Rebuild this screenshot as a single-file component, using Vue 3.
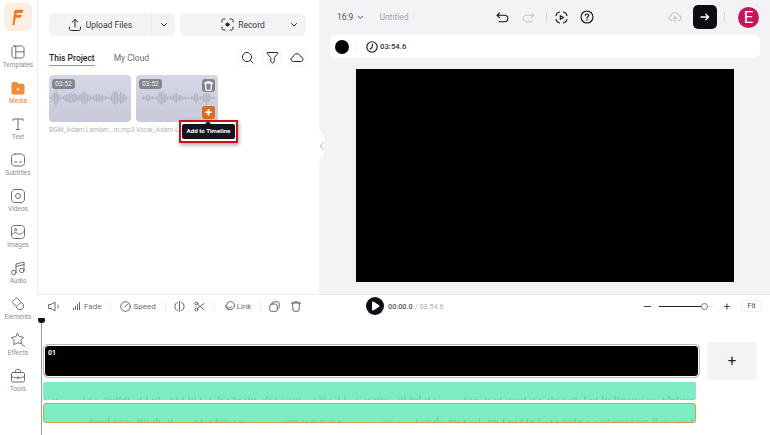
<template>
  <div class="app">
    <aside class="rail">
      <div class="logo">
        <svg width="12" height="17" viewBox="0 0 12 17"><path d="M4.300 .8h7.200L10.300 4H5.600c-.7 0-1.100.4-1.200 1l-.1.700h5.400L8.600 8.700H3.700L2.600 15.600c-.1.400-.4.600-.8.600H.5L2.100 3C2.300 1.600 3 .8 4.300 .8z" fill="#f07a26" /></svg>
      </div>
      <div v-for="item in railItems" :key="item.label" class="rail-item" :class="{ active: item.active }">
        <svg v-if="item.active" width="16" height="16" viewBox="0 0 16 16">
          <path d="M3.500 2h3c.6 0 1 .3 1.300.7l.7 1h4c1.200 0 2 .8 2 2v6.800c0 1.200-.8 2-2 2h-9c-1.200 0-2-.8-2-2v-8.500c0-1.200.8-2 2-2z" fill="#f5893a" />
          <path d="M8 7.800v3M6.500 9.300h3" stroke="#fff" stroke-width=".9" fill="none" />
        </svg>
        <svg v-else width="16" height="16" viewBox="0 0 16 16" class="line-icon"><path :d="item.d" /></svg>
        <span>{{ item.label }}</span>
      </div>
    </aside>

    <main class="main">
      <div class="top">
        <section class="panel">
          <div class="upload-row">
            <div class="big-btn">
              <div class="big-label">
                <svg width="14" height="14" viewBox="0 0 14 14" class="line-icon dark"><path d="M7 9V1.500M4.200 4 7 1.500 9.800 4M1.500 9v1.800c0 1 .7 1.700 1.700 1.700h7.600c1 0 1.700-.7 1.700-1.700V9" /></svg>
                Upload Files
              </div>
              <div class="btn-split"></div>
              <svg width="8" height="6" viewBox="0 0 8 6" class="line-icon dark caret"><path d="M1.500 1.500 4 4l2.500-2.500" /></svg>
            </div>
            <div class="big-btn">
              <div class="big-label">
                <svg width="13" height="13" viewBox="0 0 13 13" class="line-icon dark"><path d="M1 4V2.500C1 1.600 1.600 1 2.500 1H4M9 1h1.500c.9 0 1.500.6 1.500 1.500V4M12 9v1.500c0 .9-.6 1.500-1.500 1.500H9M4 12H2.500C1.600 12 1 11.400 1 10.500V9" /><circle cx="6.500" cy="6.500" r="1.600" fill="#26262b" /></svg>
                Record
              </div>
              <svg width="8" height="6" viewBox="0 0 8 6" class="line-icon dark caret over"><path d="M1.500 1.500 4 4l2.500-2.500" /></svg>
            </div>
          </div>

          <div class="tab-row">
            <span class="tab on">This Project</span>
            <span class="tab">My Cloud</span>
            <div class="tab-tools">
              <div class="tool"><svg width="13" height="13" viewBox="0 0 13 13" class="line-icon dark"><circle cx="6" cy="6" r="4.600" /><path d="m9.500 9.500 2.500 2.500" /></svg></div>
              <div class="tool"><svg width="13" height="13" viewBox="0 0 13 13" class="line-icon dark"><path d="M1.500 1.500h10c.4 0 .6.400.4.800L8.500 6.500c-.2.300-.3.500-.3.800v3.200c0 .8-.9 1.500-1.700 1.500s-1.700-.7-1.700-1.500V7.300c0-.3-.1-.5-.3-.8L1.100 2.300c-.2-.4 0-.8.400-.8z" /></svg></div>
              <div class="tool"><svg width="14" height="13" viewBox="0 0 14 13" class="line-icon dark"><path d="M3.500 10.500C2 10.500 1 9.500 1 8.200 1 7 2 6 3.200 5.900 3.500 4 5 2.800 7 2.800S10.500 4 10.800 5.900C12 6 13 7 13 8.200c0 1.300-1 2.300-2.500 2.300z" /></svg></div>
            </div>
          </div>

          <div class="media-grid">
            <div v-for="card in cards" :key="card.name" class="media-item">
              <div class="thumb">
                <svg class="thumb-wave" width="82" height="47" viewBox="0 0 82 47"><path :d="card.wave" /></svg>
                <span class="dur">03:52</span>
                <template v-if="card.hover">
                  <div class="thumb-trash">
                    <svg width="9" height="10" viewBox="0 0 9 10" class="line-icon light"><path d="M.5 2h8M3 2V.8h3V2M1.500 2l.4 6.500c0 .5.3.9.8.9h3.600c.5 0 .8-.4.8-.9L7.500 2" /></svg>
                  </div>
                  <div class="thumb-add">+</div>
                </template>
              </div>
              <div class="caption">{{ card.name }}</div>
            </div>
            <div class="tip-box">
              <span class="tip-arrow"></span>
              <span class="tip">Add to Timeline</span>
            </div>
          </div>
          <div class="handle"><svg width="5" height="8" viewBox="0 0 5 8" class="line-icon soft"><path d="M4 1 1 4l3 3" /></svg></div>
        </section>

        <section class="preview">
          <div class="head">
            <span class="ratio">16:9</span>
            <svg width="7" height="5" viewBox="0 0 8 6" class="line-icon dark"><path d="M1.500 1.500 4 4l2.500-2.500" /></svg>
            <span class="title">Untitled</span>
            <div class="head-mid">
              <svg width="13" height="11" viewBox="0 0 13 11" class="line-icon black"><path d="M3.500 1 1 3.300l2.500 2.300M1 3.300h7.500c2 0 3.300 1.200 3.300 3.200s-1.300 3.300-3.300 3.300H3" /></svg>
              <svg width="13" height="11" viewBox="0 0 13 11" class="line-icon faint"><path d="M9.500 1 12 3.300 9.500 5.600M12 3.300H4.500C2.500 3.300 1.200 4.500 1.200 6.500s1.300 3.300 3.300 3.300H10" /></svg>
              <span class="head-sep mid"></span>
              <svg width="13" height="13" viewBox="0 0 13 13" class="line-icon black"><path d="M1 4.500C1.400 2.800 2.800 1.400 4.500 1M8.500 1c1.700.4 3.100 1.800 3.500 3.500M12 8.500c-.4 1.700-1.800 3.100-3.500 3.500M4.500 12C2.800 11.600 1.400 10.200 1 8.500M5.300 4.600v3.800l3.200-1.900z" /></svg>
              <svg width="14" height="14" viewBox="0 0 14 14" class="line-icon black help"><circle cx="7" cy="7" r="6" /><path d="M5.300 5.400C5.400 4.500 6.100 4 7 4s1.700.6 1.700 1.500S7.700 6.700 7 7.500v.6M7 9.600v.6" /></svg>
            </div>
            <svg class="cloud-up" width="14" height="12" viewBox="0 0 14 12" fill="none"><path d="M4 9.500C2.200 9.500 1 8.400 1 7c0-1.300 1-2.300 2.200-2.400C3.500 2.700 5 1.500 7 1.500s3.500 1.200 3.800 3.100C12 4.700 13 5.700 13 7c0 1.400-1.200 2.500-3 2.500M7 11V6M5.200 7.500 7 5.700l1.800 1.800" stroke="#c6c6cc" stroke-width="1.100" stroke-linecap="round" stroke-linejoin="round" /></svg>
            <button class="next"><svg width="10" height="8" viewBox="0 0 10 8" class="line-icon light"><path d="M1 4h7.500M5.800 1.200 8.600 4 5.800 6.800" /></svg></button>
            <span class="head-sep right"></span>
            <div class="avatar">E</div>
          </div>
          <div class="prop-bar">
            <span class="swatch"></span>
            <span class="prop-sep"></span>
            <svg width="12" height="12" viewBox="0 0 12 12" class="line-icon black"><circle cx="6" cy="6" r="5.200" /><path d="M6.500 3.200 6 6.500 4.200 8" /></svg>
            <span class="prop-time">03:54.6</span>
          </div>
          <div class="stage"></div>
        </section>
      </div>

      <section class="timeline">
        <div class="tl-bar">
          <div class="tl-tools">
            <svg width="12" height="11" viewBox="0 0 12 11"><path d="M1 3.500h2L7 1v9L3 7.500H1zM10 4v3" /></svg>
            <svg class="bars" width="8" height="8" viewBox="0 0 8 8"><path d="M.5 8V6M2.500 8V4.500M4.500 8V2.500M6.500 8V.5" /></svg>
            <span class="tl-text fade">Fade</span>
            <span class="tl-sep"></span>
            <svg width="11" height="11" viewBox="0 0 11 11"><circle cx="5.500" cy="5.500" r="4.800" /><path d="M5 6 7.500 3.200" /></svg>
            <span class="tl-text speed">Speed</span>
            <span class="tl-sep"></span>
            <svg class="split" width="11" height="11" viewBox="0 0 11 11"><path d="M3.500 1.500C2 1.500 1 3.500 1 5.500s1 4 2.500 4M7.500 1.500C9 1.500 10 3.500 10 5.500s-1 4-2.500 4M5.500 .5v10" /></svg>
            <svg class="scissor" width="11" height="11" viewBox="0 0 11 11"><circle cx="2.300" cy="2.500" r="1.500" /><circle cx="2.300" cy="8.500" r="1.500" /><path d="M3.500 3.500 10 8.500M3.500 7.500 10 2.500" /></svg>
            <span class="tl-sep"></span>
            <svg class="link" width="11" height="11" viewBox="0 0 11 11"><circle cx="6.500" cy="4.500" r="4" /><path d="M5 8.500a3.500 3.500 0 0 1-3.500-3.800M4.800 5.800c.8 1 2.200.9 3-.1" /></svg>
            <span class="tl-text linktxt">Link</span>
            <span class="tl-sep"></span>
            <svg class="copy" width="11" height="11" viewBox="0 0 11 11"><rect x=".8" y="3" width="7.400" height="7.400" rx="2" /><path d="M3.200 3V2.500c0-1 .7-1.700 1.700-1.700h3.600c1 0 1.700.7 1.700 1.700v3.600c0 1-.7 1.700-1.700 1.700" /></svg>
            <svg class="bin" width="10" height="11" viewBox="0 0 10 11"><path d="M.5 2h9M3.200 2V.8h3.600V2M1.500 2l.5 7.200c0 .6.400 1 1 1h4c.6 0 1-.4 1-1L8.500 2" /></svg>
          </div>
          <div class="play-wrap">
            <span class="play"><svg width="9" height="10" viewBox="0 0 9 10"><path d="M1 1.300C1 .6 1.700.2 2.300.6l5.800 3.600c.5.400.5 1.200 0 1.600L2.300 9.400C1.700 9.800 1 9.400 1 8.700z" fill="#fff" /></svg></span>
            <span class="now">00:00.0</span>
            <span class="total">/ 03:54.6</span>
          </div>
          <div class="zoom">
            <span class="zoom-minus"></span>
            <div class="slider"><span class="knob"></span></div>
            <span class="zoom-plus">+</span>
            <span class="fit">Fit</span>
          </div>
        </div>

        <div class="tracks">
          <div class="track-row">
            <div class="video-track"><span>01</span></div>
            <div class="add-track">+</div>
          </div>
          <div class="audio-track">
            <svg width="653" height="18" viewBox="0 0 653 18"><path :d="audioA" /></svg>
          </div>
          <div class="audio-track picked">
            <svg width="653" height="18" viewBox="0 0 653 18"><path :d="audioB" /></svg>
          </div>
        </div>

        <div class="playhead"><span class="playhead-top"></span></div>
      </section>
    </main>

    <div class="callout"></div>
  </div>
</template>

<script setup>
const railItems = [
  { label: 'Templates', d: 'M4.500 2h7c1.500 0 2.500 1 2.500 2.500v7c0 1.500-1 2.500-2.500 2.500h-7C3 14 2 13 2 11.500v-7C2 3 3 2 4.500 2zM5.800 2v12M5.800 7.800H14' },
  { label: 'Media', active: true },
  { label: 'Text', d: 'M3 4.500V3h10v1.500M8 3v10.500M6.300 13.500h3.400' },
  { label: 'Subtitles', d: 'M5 2h6c2 0 3.500 1.500 3.500 3.500v5c0 2-1.500 3.500-3.500 3.500H5c-2 0-3.500-1.500-3.500-3.500v-5C1.500 3.500 3 2 5 2zM4.500 10h2.500M9.500 10h2' },
  { label: 'Videos', d: 'M5 1.500h6c2 0 3.500 1.500 3.500 3.500v6c0 2-1.500 3.500-3.500 3.500H5c-2 0-3.500-1.500-3.500-3.500V5c0-2 1.500-3.500 3.500-3.500zM8 5.500a2.500 2.500 0 1 1 0 5 2.500 2.500 0 0 1 0-5z' },
  { label: 'Images', d: 'M4.500 1.500h7c1.700 0 3 1.300 3 3v7c0 1.700-1.300 3-3 3h-7c-1.700 0-3-1.300-3-3v-7c0-1.700 1.300-3 3-3zM1.500 11c2-2.500 4-3 6-1.500S12 10 14.500 7M5.500 4.500a1.200 1.200 0 1 1 0 2.400 1.200 1.200 0 0 1 0-2.400z' },
  { label: 'Audio', d: 'M6 12.500V4l8-2v8.500M6 12.500a2.200 2.200 0 1 1-4.400 0 2.200 2.200 0 0 1 4.400 0zM14 10.500a2.200 2.200 0 1 1-4.400 0 2.200 2.200 0 0 1 4.400 0zM6 6.500l8-2' },
  { label: 'Elements', d: 'M5.700 2.300c.5-.5 1.100-.5 1.600 0l3 3c.5.5.5 1.100 0 1.600l-3 3c-.5.5-1.100.5-1.600 0l-3-3c-.5-.5-.5-1.100 0-1.600zM10.800 6.300a3.800 3.800 0 1 1-4.500 5' },
  { label: 'Effects', d: 'M7.500 1.500l1.800 3.100 4.200.7-2.700 3 .8 3.700-3.800-1.300-4 2 .3-4.300L1.500 5.500l4.200-.8zM12.500 12.500l2 2' },
  { label: 'Tools', d: 'M3 4.500h10c1 0 1.500.6 1.500 1.500v6.500c0 1-.5 1.500-1.500 1.500H3c-1 0-1.500-.5-1.500-1.500V6c0-.9.5-1.500 1.500-1.500zM5.500 4.500V3c0-.8.5-1.500 1.300-1.500h2.400c.8 0 1.300.7 1.300 1.500v1.500M1.500 8.500c4 2 9 2 13 0M8 8.500v2' }
]

// small seeded generator, so the picture stays the same between runs
function seeded(seed) {
  let s = seed
  return () => {
    s = (s * 9301 + 49297) % 233280
    return s / 233280
  }
}

function thumbWave(seed, from, to, peaks) {
  const rnd = seeded(seed)
  let d = ''
  for (let x = from; x <= to; x += 1.5) {
    let env = 1.5
    for (const [px, amp, w] of peaks) {
      env = Math.max(env, amp * Math.exp(-((x - px) ** 2) / (w * w)))
    }
    const h = env * (0.55 + rnd() * 0.45)
    d += `M${x} ${(23 - h).toFixed(1)}V${(23 + h).toFixed(1)}`
  }
  return d
}

function trackWave(seed, height, gaps) {
  const rnd = seeded(seed)
  let d = ''
  for (let x = 2; x < 651; x += 3) {
    if (gaps.some(([a, b]) => x > a && x < b)) continue
    if (rnd() < 0.35) continue
    const h = 1 + rnd() * rnd() * 4
    d += `M${x} ${height}v${(-h).toFixed(1)}`
  }
  return d
}

const cards = [
  {
    name: 'BGM_Adam Lamber...m.mp3',
    wave: thumbWave(3, 1, 78, [[7, 10, 3], [22, 6, 8], [35, 7, 7], [50, 5, 8], [66, 11, 3], [72, 7, 5]])
  },
  {
    name: 'Vocal_Adam Lamber...m.mp3',
    hover: true,
    wave: thumbWave(7, 6, 78, [[12, 4, 5], [26, 9, 5], [40, 5, 7], [60, 7, 3], [70, 8, 4]])
  }
]

const audioA = trackWave(11, 18, [[15, 40], [400, 420]])
const audioB = trackWave(23, 18, [[0, 42], [130, 150], [200, 240], [300, 340]])
</script>

<style>
html, body {
  margin: 0;
  background: #fff;
}
</style>

<style scoped>
.app {
  position: relative;
  width: 770px;
  height: 435px;
  overflow: hidden;
  display: flex;
  font-family: Roboto, "Liberation Sans", sans-serif;
  color: #26262b;
  background: #fff;
}

.line-icon {
  fill: none;
  stroke: #6b6b73;
  stroke-width: 1;
  stroke-linecap: round;
  stroke-linejoin: round;
  flex: none;
}
.line-icon.dark { stroke: #26262b; }
.line-icon.black { stroke: #111; stroke-width: 1.100; }
.line-icon.faint { stroke: #c4c4ca; }
.line-icon.light { stroke: #fff; stroke-width: 1.300; }
.line-icon.soft { stroke: #b5b5bb; }

/* left rail */
.rail {
  position: relative;
  width: 38px;
  flex: none;
  display: flex;
  flex-direction: column;
  align-items: center;
  padding: 3px 2px 0 0;
  box-sizing: border-box;
}
.rail::after {
  content: "";
  position: absolute;
  right: 0;
  top: 0;
  width: 1px;
  height: 294px;
  background: #ececef;
}
.logo {
  width: 28px;
  height: 28px;
  flex: none;
  margin-bottom: 13px;
  border-radius: 6px;
  background: #fdeee2;
  display: flex;
  align-items: center;
  justify-content: center;
}
.rail-item {
  height: 36px;
  flex: none;
  display: flex;
  flex-direction: column;
  align-items: center;
  gap: 1px;
  font-size: 6.500px;
  color: #8d8d95;
}
.rail-item.active {
  color: #f07a26;
}

.main {
  flex: 1;
  min-width: 0;
  display: flex;
  flex-direction: column;
}
.top {
  height: 294px;
  flex: none;
  display: flex;
}

/* media panel */
.panel {
  position: relative;
  z-index: 1;
  width: 281px;
  flex: none;
  padding: 13px 13px 0 11px;
  box-sizing: border-box;
}
.upload-row {
  display: flex;
  gap: 5px;
}
.big-btn {
  position: relative;
  flex: 1;
  height: 23px;
  border-radius: 6px;
  background: #f3f3f5;
  display: flex;
  align-items: center;
  font-size: 8.500px;
  color: #3a3a40;
}
.big-label {
  flex: 1;
  display: flex;
  align-items: center;
  justify-content: center;
  gap: 4px;
}
.btn-split {
  width: 1px;
  height: 23px;
  background: #eaeaed;
}
.caret {
  margin: 0 7px 0 8px;
}
.caret.over {
  position: absolute;
  right: 0;
  top: 9px;
  margin: 0 8px 0 0;
}
.tab-row {
  display: flex;
  align-items: center;
  margin-top: 12px;
  height: 19px;
}
.tab {
  position: relative;
  font-size: 8.500px;
  color: #6b6b73;
  margin-right: 19px;
}
.tab.on {
  color: #26262b;
  font-weight: 500;
}
.tab.on::after {
  content: "";
  position: absolute;
  left: 0;
  right: 0;
  bottom: -3px;
  height: 1px;
  background: #f07a26;
}
.tab-tools {
  margin-left: auto;
  display: flex;
  gap: 7px;
}
.tool {
  width: 18px;
  height: 19px;
  border: 1px solid #f4f4f6;
  border-radius: 5px;
  box-sizing: border-box;
  display: flex;
  align-items: center;
  justify-content: center;
}
.media-grid {
  position: relative;
  display: flex;
  gap: 5px;
  margin-top: 8px;
}
.media-item {
  width: 82px;
  flex: none;
}
.thumb {
  position: relative;
  height: 47px;
  border-radius: 4px;
  background: linear-gradient(180deg, #d5d7e5, #c8cadb);
}
.thumb-wave {
  position: absolute;
  inset: 0;
  fill: none;
  stroke: #a7a9b6;
  stroke-width: .8;
}
.dur {
  position: absolute;
  left: 3px;
  top: 4px;
  padding: 1px 3px;
  border-radius: 3px;
  background: #84858c;
  color: #f1f1f3;
  font-size: 6.800px;
  line-height: 8px;
}
.thumb-trash, .thumb-add {
  position: absolute;
  right: 3px;
  width: 13px;
  height: 13px;
  border-radius: 3px;
  display: flex;
  align-items: center;
  justify-content: center;
}
.thumb-trash {
  top: 4px;
  background: #84858c;
}
.thumb-add {
  top: 31px;
  background: #e06a16;
  color: #fff;
  font-size: 13px;
  font-weight: 700;
  line-height: 13px;
}
.caption {
  margin-top: 4px;
  font-size: 6.700px;
  color: #b3b3ba;
  white-space: nowrap;
}
.tip-box {
  position: absolute;
  left: 133px;
  top: 49px;
  z-index: 2;
}
.tip {
  display: block;
  width: 53px;
  height: 15px;
  box-sizing: border-box;
  border-radius: 2px;
  background: #14141c;
  color: #fff;
  font-size: 6.200px;
  font-weight: 700;
  line-height: 15px;
  text-align: center;
  white-space: nowrap;
}
.tip-arrow {
  position: absolute;
  left: 23px;
  top: -3px;
  border: 3px solid transparent;
  border-top: 0;
  border-bottom-color: #14141c;
}
.handle {
  position: absolute;
  left: 280px;
  top: 128px;
  width: 6px;
  height: 35px;
  background: #fff;
  clip-path: polygon(0 0, 100% 22%, 100% 78%, 0 100%);
  display: flex;
  align-items: center;
  justify-content: center;
}

/* preview side */
.preview {
  flex: 1;
  background: #f3f3f6;
  display: flex;
  flex-direction: column;
  padding: 5px 10px 0 11px;
}
.head {
  display: flex;
  align-items: center;
  height: 24px;
  font-size: 8.500px;
  padding-left: 7px;
}
.ratio {
  color: #555;
  margin-right: 4px;
}
.title {
  color: #a5a5ac;
  margin-left: 15px;
}
.head-mid {
  display: flex;
  align-items: center;
  margin-left: 87px;
  gap: 13px;
}
.head-sep {
  width: 1px;
  height: 10px;
  background: #d8d8dc;
}
.head-sep.mid {
  margin: 0 -5px 0 -2px;
}
.help {
  margin-left: -.5px;
}
.cloud-up {
  margin-left: 74px;
}
.next {
  width: 24px;
  height: 24px;
  margin-left: 11px;
  border: 0;
  padding: 0;
  border-radius: 5px;
  background: #0c0c12;
  display: flex;
  align-items: center;
  justify-content: center;
}
.head-sep.right {
  margin-left: 7px;
}
.avatar {
  width: 21px;
  height: 21px;
  margin-left: 13px;
  border-radius: 50%;
  background: #c5175d;
  color: #fff;
  font-size: 17px;
  line-height: 21px;
  text-align: center;
}
.prop-bar {
  display: flex;
  align-items: center;
  height: 23px;
  margin-top: 6px;
  border-radius: 6px;
  background: #fff;
  padding-left: 5px;
}
.swatch {
  width: 14px;
  height: 14px;
  border-radius: 50%;
  background: #000;
}
.prop-sep {
  width: 1px;
  height: 8px;
  margin: 0 10px 0 6px;
  background: #ececef;
}
.prop-time {
  margin-left: 2px;
  font-size: 7.800px;
  font-weight: 500;
  color: #333;
}
.stage {
  width: 378px;
  height: 213px;
  margin: 11px 0 0 26px;
  background: #000;
}

/* timeline */
.timeline {
  position: relative;
  flex: 1;
  border-top: 1px solid #ececef;
  margin-left: -1px;
}
.tl-bar {
  position: relative;
  height: 22px;
  display: flex;
  align-items: center;
  padding: 0 8px 0 11px;
  font-size: 8px;
  color: #6b6b73;
}
.tl-tools {
  display: flex;
  align-items: center;
  width: 314px;
  flex: none;
}
.tl-tools svg {
  fill: none;
  stroke: #55555c;
  stroke-width: .9;
  stroke-linecap: round;
  stroke-linejoin: round;
  flex: none;
}
.tl-text { flex: none; }
.bars { margin-left: 13px; }
.fade { margin-left: 3px; }
.tl-sep {
  width: 1px;
  height: 11px;
  background: #eeeef0;
  flex: none;
  margin: 0 9px;
}
.speed { margin-left: 2px; }
.tl-tools .split { margin-left: -1px; }
.tl-tools .scissor { margin-left: 9.500px; }
.linktxt { margin-left: 1.500px; }
.tl-tools .copy { margin-left: -1.500px; margin-right: 11.500px; }
.play-wrap {
  display: flex;
  align-items: center;
  margin-left: 4px;
  font-size: 7.300px;
}
.play {
  width: 18px;
  height: 18px;
  border-radius: 50%;
  background: #0c0c12;
  display: flex;
  align-items: center;
  justify-content: center;
  margin-right: 4px;
}
.now { color: #555; font-weight: 500; }
.total { color: #b0b0b7; margin-left: 2px; }
.zoom {
  position: absolute;
  right: 8px;
  top: 5px;
  display: flex;
  align-items: center;
}
.zoom-minus {
  width: 7px;
  height: 1px;
  background: #444;
}
.slider {
  position: relative;
  width: 54px;
  height: 1px;
  margin: 0 11px 0 8px;
  background: linear-gradient(90deg, #222 85%, #ddd 85%);
}
.knob {
  position: absolute;
  left: 42px;
  top: -3px;
  width: 5px;
  height: 5px;
  border: 1px solid #777;
  border-radius: 50%;
  background: #fff;
}
.zoom-plus {
  font-size: 11px;
  line-height: 11px;
  color: #444;
}
.fit {
  width: 21px;
  height: 12px;
  margin-left: 11px;
  border: 1px solid #f1f1f3;
  border-radius: 3px;
  box-sizing: border-box;
  text-align: center;
  font-size: 7px;
  line-height: 10px;
  color: #444;
}
.tracks {
  padding: 25px 0 0 6px;
  display: flex;
  flex-direction: column;
  align-items: flex-start;
}
.track-row {
  display: flex;
  align-items: center;
  gap: 8px;
}
.video-track {
  width: 655px;
  height: 32px;
  margin-left: 1px;
  box-sizing: border-box;
  border: 1px solid #fff;
  outline: 1px solid #b8b8bd;
  border-radius: 4px;
  background: #000;
  color: #fff;
  font-size: 7px;
  font-weight: 700;
  padding: 3px 3px;
}
.video-track span { display: block; }
.add-track {
  width: 50px;
  height: 38px;
  border-radius: 4px;
  background: #f3f3f6;
  font-size: 15px;
  line-height: 38px;
  text-align: center;
  color: #222;
}
.audio-track {
  width: 653px;
  height: 18px;
  margin-top: 2px;
  border-radius: 2px;
  background: #7decc3;
  overflow: hidden;
  display: flex;
}
.audio-track svg {
  fill: none;
  stroke: #5db592;
  stroke-width: .7;
}
.audio-track.picked {
  margin-top: 3px;
  border: 1px solid #d8a04e;
  border-radius: 3px;
  box-sizing: border-box;
  height: 20px;
}
.playhead {
  position: absolute;
  left: 4px;
  top: 23px;
  bottom: 0;
  width: 1px;
  background: #9a9aa0;
}
.playhead-top {
  position: absolute;
  left: -3px;
  top: 0;
  width: 7px;
  height: 5px;
  border-radius: 1px 1px 3px 3px;
  background: #111;
}
.callout {
  position: absolute;
  left: 179px;
  top: 120px;
  width: 59px;
  height: 23px;
  box-sizing: border-box;
  border: 2px solid #c8101e;
  box-shadow: 1px 2px 4px rgba(0, 0, 0, .35);
  z-index: 3;
}
</style>
